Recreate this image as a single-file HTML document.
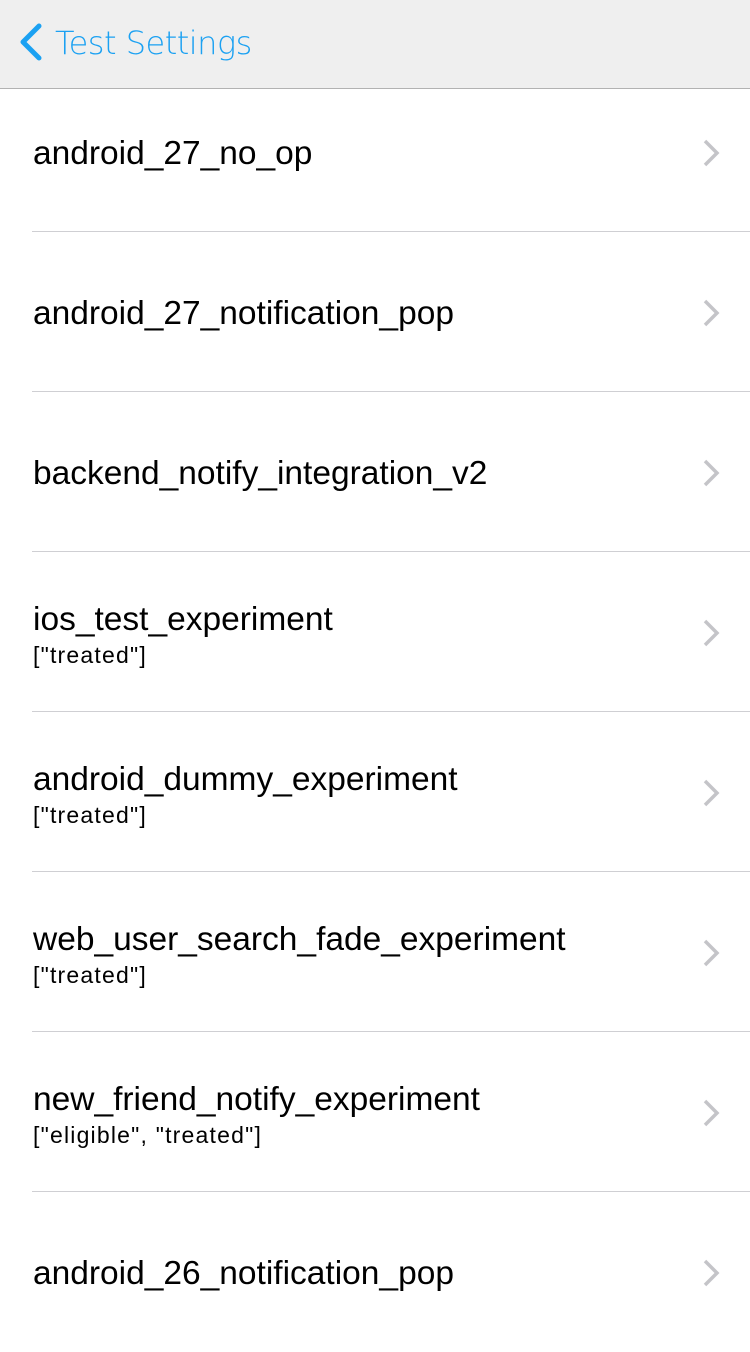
<html><head><style>
body{margin:0;width:750px;height:1334px;overflow:hidden;background:#fff;font-family:"Liberation Sans",sans-serif;position:relative}
.hdr{position:absolute;top:0;left:0;width:750px;height:89px;background:#efefef;border-bottom:1px solid #b2b2b2;box-sizing:border-box;z-index:2}
.hdr span{position:absolute;left:55px;top:24px;font-size:32px;color:#1ba1f2;font-family:"DejaVu Sans","Liberation Sans",sans-serif;font-weight:300;letter-spacing:-0.5px}
.row{position:absolute;left:0;width:750px;height:160px}
.row .t{position:absolute;left:33px;font-size:33.5px;color:#000;white-space:nowrap}
.row .s{position:absolute;left:33px;font-size:23px;letter-spacing:1.2px;color:#000}
.row .line{position:absolute;left:32px;right:0;bottom:0;height:1px;background:#cfcfd3}
.row svg{position:absolute;left:700px;top:66px}
</style></head><body>
<div class="hdr"><svg style="position:absolute;left:17px;top:22px" width="28" height="40" viewBox="0 0 28 40"><path d="M22 4 L6 20 L22 36" fill="none" stroke="#1ba1f2" stroke-width="5" stroke-linecap="round" stroke-linejoin="round"/></svg><span>Test Settings</span></div>

<div class="row" style="top:72px"><div class="t" style="top:63px">android_27_no_op</div><svg width="22" height="30" viewBox="0 0 22 30"><path d="M5 3 L17 15 L5 27" fill="none" stroke="#c4c4c8" stroke-width="3.5"/></svg><div class="line"></div></div>
<div class="row" style="top:232px"><div class="t" style="top:63px">android_27_notification_pop</div><svg width="22" height="30" viewBox="0 0 22 30"><path d="M5 3 L17 15 L5 27" fill="none" stroke="#c4c4c8" stroke-width="3.5"/></svg><div class="line"></div></div>
<div class="row" style="top:392px"><div class="t" style="top:63px">backend_notify_integration_v2</div><svg width="22" height="30" viewBox="0 0 22 30"><path d="M5 3 L17 15 L5 27" fill="none" stroke="#c4c4c8" stroke-width="3.5"/></svg><div class="line"></div></div>
<div class="row" style="top:552px"><div class="t" style="top:49px">ios_test_experiment</div><div class="s" style="top:90px">["treated"]</div><svg width="22" height="30" viewBox="0 0 22 30"><path d="M5 3 L17 15 L5 27" fill="none" stroke="#c4c4c8" stroke-width="3.5"/></svg><div class="line"></div></div>
<div class="row" style="top:712px"><div class="t" style="top:49px">android_dummy_experiment</div><div class="s" style="top:90px">["treated"]</div><svg width="22" height="30" viewBox="0 0 22 30"><path d="M5 3 L17 15 L5 27" fill="none" stroke="#c4c4c8" stroke-width="3.5"/></svg><div class="line"></div></div>
<div class="row" style="top:872px"><div class="t" style="top:49px">web_user_search_fade_experiment</div><div class="s" style="top:90px">["treated"]</div><svg width="22" height="30" viewBox="0 0 22 30"><path d="M5 3 L17 15 L5 27" fill="none" stroke="#c4c4c8" stroke-width="3.5"/></svg><div class="line"></div></div>
<div class="row" style="top:1032px"><div class="t" style="top:49px">new_friend_notify_experiment</div><div class="s" style="top:90px">["eligible", "treated"]</div><svg width="22" height="30" viewBox="0 0 22 30"><path d="M5 3 L17 15 L5 27" fill="none" stroke="#c4c4c8" stroke-width="3.5"/></svg><div class="line"></div></div>
<div class="row" style="top:1192px"><div class="t" style="top:63px">android_26_notification_pop</div><svg width="22" height="30" viewBox="0 0 22 30"><path d="M5 3 L17 15 L5 27" fill="none" stroke="#c4c4c8" stroke-width="3.5"/></svg></div>
</body></html>
